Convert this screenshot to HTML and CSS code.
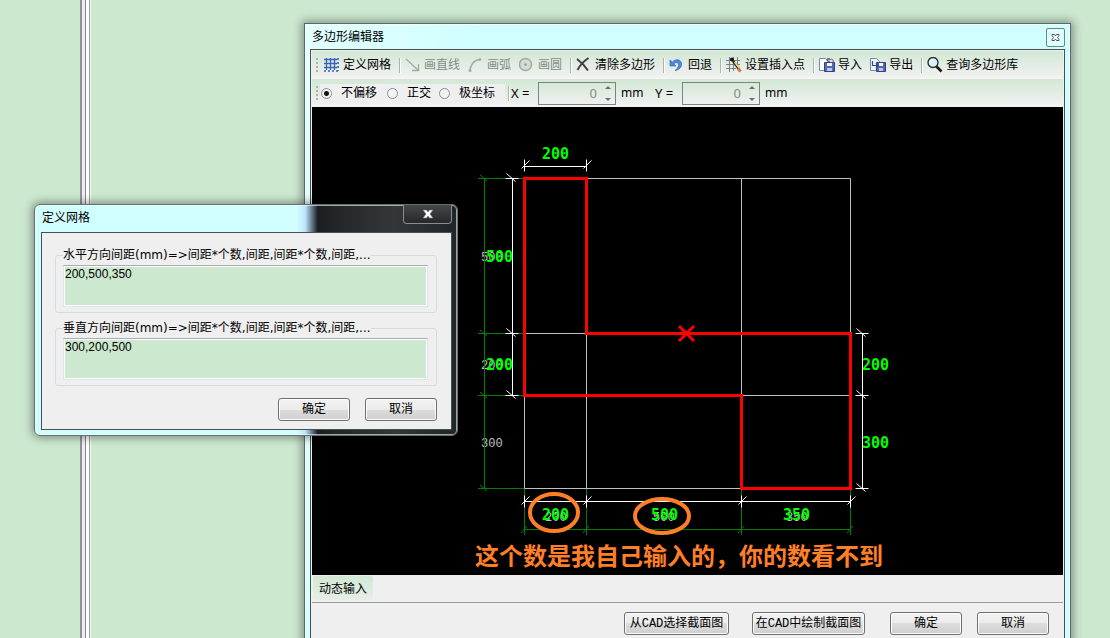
FILE: index.html
```
<!DOCTYPE html>
<html lang="zh-CN">
<head>
<meta charset="utf-8">
<title>多边形编辑器</title>
<link rel="stylesheet" href="styles.css">
</head>
<body>
<main class="desktop">
  <div class="pane-left"></div>
  <div class="splitter"></div>

  <section class="window editor" aria-label="多边形编辑器">
    <header class="titlebar">
      <h1 class="title">多边形编辑器</h1>
      <button class="editor-close" type="button" aria-label="关闭">
        <svg width="9" height="9" viewBox="0 0 9 9"><path d="M1 1.500h2.500l1 1.500 1-1.500H8v1L6.500 4.500 8 6.500v1H5.500l-1-1.500-1 1.500H1v-1L2.500 4.500 1 2.500z" fill="#fff" stroke="#4a5058"/></svg>
      </button>
    </header>
    <div class="client editor-client">
      <div class="toolbar">
        <span class="grip"></span>
        <button class="tool" type="button">
          <svg width="16" height="16" viewBox="0 0 16 16"><path d="M2.500 1v12M6.500 1v12M10.500 1v12M0 2.500h13M0 6.500h13M0 10.500h13" stroke="#3a62b8" stroke-width="1.300" fill="none"/><path d="M14 1v13M0 14h14" stroke="#3a62b8" stroke-width="1.600" stroke-dasharray="2 2"/></svg>
          定义网格</button>
        <span class="sep"></span>
        <button class="tool" type="button" disabled>
          <svg width="16" height="16" viewBox="0 0 16 16"><path d="M1 2l12 11M13.500 7v6.500H7" stroke="#a0aaa2" stroke-width="1.300" fill="none"/></svg>
          画直线</button>
        <button class="tool" type="button" disabled>
          <svg width="16" height="16" viewBox="0 0 16 16"><path d="M2 14C2 8 6 3 12 2.500" stroke="#a0aaa2" stroke-width="1.500" fill="none"/><circle cx="2" cy="13.500" r="1.500" fill="#a0aaa2"/><circle cx="12" cy="2.500" r="1.300" fill="#a0aaa2"/></svg>
          画弧</button>
        <button class="tool" type="button" disabled>
          <svg width="16" height="16" viewBox="0 0 16 16"><circle cx="6.500" cy="7.500" r="6" stroke="#a0aaa2" stroke-width="1.500" fill="#d3ddd4"/><circle cx="6.500" cy="7.500" r="1.200" fill="#8b958d"/></svg>
          画圆</button>
        <span class="sep"></span>
        <button class="tool" type="button">
          <svg width="16" height="16" viewBox="0 0 16 16"><path d="M1 2C5 5 9 9 12 13.500M12.500 1C8 4 4 8 1.500 13" stroke="#3d3d44" stroke-width="1.900" fill="none"/></svg>
          清除多边形</button>
        <span class="sep"></span>
        <button class="tool" type="button">
          <svg width="16" height="16" viewBox="0 0 16 16"><path d="M1 3v6h6L5 7c2-2.500 5-1.500 4.500 1.500C9.200 10.500 7.500 12.500 6 13.500c4-.5 7-3.500 6.500-7C12 2 6.500 1.500 3.500 5z" fill="#4b87dc" stroke="#3468b8" stroke-width=".7"/></svg>
          回退</button>
        <span class="sep"></span>
        <button class="tool" type="button">
          <svg width="16" height="16" viewBox="0 0 16 16"><path d="M3.500 0v15M7.500 0v14M11.500 0v9M0 3.500h14M0 7.500h14M0 11.500h10" stroke="#7b827d" fill="none"/><circle cx="6" cy="2.500" r="2" fill="#111"/><path d="M7 4l6 8" stroke="#33251c" stroke-width="2.600"/><path d="M8.500 5l5.500 7" stroke="#f0dc70" stroke-width="1.500"/><path d="M12 11.500l2.500 3" stroke="#cc775e" stroke-width="3"/></svg>
          设置插入点</button>
        <span class="sep"></span>
        <button class="tool" type="button">
          <svg width="16" height="16" viewBox="0 0 16 16"><path d="M.5 1.500h6l3 3v9h-9z" fill="#fff" stroke="#7188b5"/><path d="M5.500 5.500h10v9h-10z" fill="#5666b8" stroke="#363f7e"/><path d="M8 6h5v3H8z" fill="#f4f6ff"/><path d="M8 11h5v3H8z" fill="#bfc6e6"/><path d="M8 4l2-3 1 2c2-2 4 0 3 3M9 1l-1 3 3 .3" fill="none" stroke="#4f5768"/></svg>
          导入</button>
        <button class="tool" type="button">
          <svg width="16" height="16" viewBox="0 0 16 16"><path d="M.5 1.500h6l3 3v9h-9z" fill="#edf3ff" stroke="#7188b5"/><path d="M6.500 5.500h9v9h-9z" fill="#5666b8" stroke="#363f7e"/><path d="M9 6h4v3H9z" fill="#f4f6ff"/><path d="M9 11h4v3H9z" fill="#bfc6e6"/><path d="M2.500 4v4.500h6M6 6L8.500 8.500 6 11" fill="none" stroke="#3c4c78" stroke-width="1.200"/></svg>
          导出</button>
        <span class="sep"></span>
        <button class="tool" type="button">
          <svg width="16" height="16" viewBox="0 0 16 16"><circle cx="6" cy="5.500" r="5" fill="#d5f3fb" stroke="#23282b" stroke-width="1.300"/><path d="M3 5c.5-1.500 1.500-2 3-2" stroke="#fff" stroke-width="1.300" fill="none"/><path d="M9.500 9.500l5 5" stroke="#1b1b1b" stroke-width="2.600"/></svg>
          查询多边形库</button>
      </div>

      <div class="toolbar">
        <span class="grip"></span>
        <div class="modes" role="radiogroup" aria-label="偏移方式">
          <label class="mode"><input class="radio" type="radio" name="mode" checked>不偏移</label>
          <label class="mode"><input class="radio" type="radio" name="mode">正交</label>
          <label class="mode"><input class="radio" type="radio" name="mode">极坐标</label>
        </div>
        <span class="sep sep-tight"></span>
        <label class="axis" for="offset-x">X =</label>
        <span class="spinbox">
          <input class="spin-value" id="offset-x" type="text" value="0" disabled>
          <span class="spin-buttons">
            <button class="spin spin-up" type="button" aria-label="增加 X" disabled></button>
            <button class="spin spin-down" type="button" aria-label="减少 X" disabled></button>
          </span>
        </span>
        <span class="unit">mm</span>
        <label class="axis" for="offset-y">Y =</label>
        <span class="spinbox">
          <input class="spin-value" id="offset-y" type="text" value="0" disabled>
          <span class="spin-buttons">
            <button class="spin spin-up" type="button" aria-label="增加 Y" disabled></button>
            <button class="spin spin-down" type="button" aria-label="减少 Y" disabled></button>
          </span>
        </span>
        <span class="unit">mm</span>
      </div>

      <svg class="drawing" viewBox="312 107 751 468" role="img" aria-label="截面图">
        <defs>
          <path id="tick-v" d="M-7 0H6M-6-5L3 3" />
          <path id="tick-h" d="M0-6V6M-3 3L5-5" />
        </defs>
        <g class="grid">
          <path d="M524.500 178.500h326v310h-326zM586.500 178.500v310M741.500 178.500v310M524.500 333.500h326M524.500 395.500h326"/>
        </g>
        <g class="size-gray">
          <text x="481" y="261">500</text>
          <text x="481" y="369">200</text>
          <text x="481" y="447">300</text>
          <text x="545" y="521">200</text>
          <text x="653" y="521">500</text>
          <text x="786" y="521">350</text>
        </g>
        <g class="dim-green">
          <path d="M484.500 178.500v310M478 178.500h46M478 333.500h46M478 395.500h46M478 488.500h46"/>
          <path d="M480 175l7 6M480 330l7 6M480 392l7 6M480 485l7 6"/>
          <path d="M524.500 529.500h326M524.500 489v46M586.500 489v46M741.500 489v46M850.500 489v46"/>
          <path d="M521 533l6-7M583 533l6-7M738 533l6-7M847 533l6-7"/>
        </g>
        <g class="dim-white">
          <path d="M524.500 166.500h62M512.500 178.500v217M862.500 333.500v155M524.500 501.500h326"/>
          <use href="#tick-h" x="524.500" y="165.500"/><use href="#tick-h" x="586.500" y="165.500"/>
          <use href="#tick-v" x="512.500" y="178.500"/><use href="#tick-v" x="512.500" y="333.500"/><use href="#tick-v" x="512.500" y="395.500"/>
          <use href="#tick-v" x="862.500" y="333.500"/><use href="#tick-v" x="862.500" y="395.500"/><use href="#tick-v" x="862.500" y="488.500"/>
          <use href="#tick-h" x="524.500" y="501.500"/><use href="#tick-h" x="586.500" y="501.500"/><use href="#tick-h" x="741.500" y="501.500"/><use href="#tick-h" x="850.500" y="501.500"/>
        </g>
        <g class="size-green">
          <text x="542" y="159">200</text>
          <text x="486" y="262">500</text>
          <text x="486" y="370">200</text>
          <text x="862" y="370">200</text>
          <text x="862" y="448">300</text>
          <text x="542" y="520">200</text>
          <text x="651" y="520">500</text>
          <text x="783" y="520">350</text>
        </g>
        <path class="shape" d="M524.500 178.500h62v155h264v155h-109v-93h-217zM679 326l15 15M694 326l-15 15"/>
        <g class="marks">
          <ellipse cx="554" cy="512.500" rx="24" ry="18.500"/>
          <ellipse cx="662" cy="516" rx="27" ry="17"/>
        </g>
        <text class="remark" x="475" y="565">这个数是我自己输入的，你的数看不到</text>
      </svg>

      <div class="statusbar"><button class="status-tool" type="button">动态输入</button></div>
      <footer class="editor-actions">
        <button class="btn btn-from" type="button">从CAD选择截面图</button>
        <button class="btn btn-draw" type="button">在CAD中绘制截面图</button>
        <button class="btn" type="button">确定</button>
        <button class="btn" type="button">取消</button>
      </footer>
    </div>
  </section>

  <section class="window dialog" role="dialog" aria-label="定义网格">
    <header class="titlebar dialog-titlebar">
      <h2 class="title">定义网格</h2>
      <button class="dialog-close" type="button" aria-label="关闭">
        <svg width="12" height="10" viewBox="0 0 12 10"><path d="M1 1h3.500L6 3l1.500-2H11L8 5l3 4H7.500L6 7 4.500 9H1l3-4z" fill="#fff" stroke="#70747c" stroke-width=".6"/></svg>
      </button>
    </header>
    <form class="client dialog-client">
      <fieldset class="group">
        <legend class="legend"><label for="spacing-h">水平方向间距(mm)=&gt;间距*个数,间距,间距*个数,间距,...</label></legend>
        <textarea class="spacing" id="spacing-h">200,500,350</textarea>
      </fieldset>
      <fieldset class="group">
        <legend class="legend"><label for="spacing-v">垂直方向间距(mm)=&gt;间距*个数,间距,间距*个数,间距,...</label></legend>
        <textarea class="spacing" id="spacing-v">300,200,500</textarea>
      </fieldset>
      <div class="dialog-actions">
        <button class="btn" type="button">确定</button>
        <button class="btn" type="button">取消</button>
      </div>
    </form>
  </section>
</main>
</body>
</html>
```

FILE: styles.css
```
* {
  box-sizing: border-box;
}

body {
  margin: 0;
  font: 12px/16px "Noto Sans", "Noto Sans CJK SC", sans-serif;
  color: #000;
}

button,
input,
textarea {
  margin: 0;
  padding: 0;
  font: inherit;
  color: inherit;
}

.desktop {
  position: relative;
  display: flex;
  height: 100vh;
  overflow: hidden;
  background: #cce8cf;
}

.pane-left {
  flex: 0 0 80px;
}

.splitter {
  flex: 0 0 11px;
  background: linear-gradient(90deg, #8d929a 0 2px, #eeeef2 2px 5px, #85858f 5px 6px, #fff 6px 9px, #9b9ba3 9px 10px, #f6f6f6 10px 11px);
}

/* Windows */

.window {
  position: absolute;
  display: flex;
  flex-direction: column;
  border: 1px solid #566b69;
  box-shadow: inset 0 0 0 1px #f2ffff, 0 0 9px 2px rgba(0, 0, 0, 0.38);
}

.titlebar {
  display: flex;
  justify-content: space-between;
}

.title {
  margin: 0;
  font-size: 12px;
  line-height: 16px;
  font-weight: 400;
}

.client {
  border: 1px solid #44524f;
  background: #efefef;
}

.editor {
  top: 23px;
  left: 304px;
  right: 39px;
  padding: 0 5px 6px;
  background: linear-gradient(100deg, #e4ffff, #d0fefe 20%);
}

.editor .titlebar {
  height: 25px;
  padding: 4px 0 0 2px;
}

.editor .title {
  padding-top: 1px;
}

.editor-close {
  display: flex;
  align-items: center;
  justify-content: center;
  width: 19px;
  height: 19px;
  border: 1px solid #6a8583;
  border-radius: 2px;
  background: #dcffff;
}

.editor-client {
  padding: 1px;
}

/* Toolbars */

.toolbar {
  display: flex;
  align-items: center;
  height: 28px;
  padding-left: 4px;
  background: linear-gradient(#d2e8d5, #eef0ee 85%, #f5f5f5);
  white-space: nowrap;
}

.grip {
  flex: 0 0 2px;
  height: 14px;
  background: repeating-linear-gradient(#a9b5ab 0 2px, transparent 2px 4px);
}

.tool {
  display: flex;
  align-items: center;
  gap: 3px;
  margin-right: 8px;
  border: 0;
  background: none;
}

.grip + .tool {
  margin-left: 6px;
}

.tool:disabled {
  color: #838c85;
}

.sep {
  flex: 0 0 2px;
  height: 15px;
  margin-right: 4px;
  border-left: 1px solid #aab5ac;
  border-right: 1px solid #fff;
}

.sep-tight {
  margin-right: 1px;
}

.modes {
  display: flex;
  align-items: center;
  gap: 8px;
  height: 18px;
  margin-left: 2px;
  margin-right: 3px;
  padding: 0 10px 0 1px;
  background: #efefef;
}

.mode {
  display: flex;
  align-items: center;
  gap: 9px;
}

.mode:first-child {
  margin-right: 2px;
}

.radio {
  appearance: none;
  width: 11px;
  height: 11px;
  border: 1px solid #8a8f94;
  border-radius: 50%;
  background: #f3f3f3;
}

.radio:checked {
  background: radial-gradient(circle, #111 0 2px, #f3f3f3 3px);
}

.axis {
  width: 27px;
  font-size: 13px;
}

.spinbox {
  display: flex;
  width: 78px;
  height: 23px;
  border: 1px solid #7b857d;
}

.spin-value {
  flex: 1;
  min-width: 0;
  border: 0;
  background: none;
  color: #848c86;
  font-size: 13px;
  text-align: right;
}

.spin-buttons {
  display: flex;
  flex-direction: column;
  justify-content: space-between;
  align-items: center;
  width: 14px;
  margin-left: 4px;
  padding: 3px 0;
}

.spin {
  width: 0;
  height: 0;
  border: 3px solid transparent;
}

.spin-up {
  border-top: 0;
  border-bottom-color: #69716b;
}

.spin-down {
  border-bottom: 0;
  border-top-color: #69716b;
}

.unit {
  width: 39px;
  padding-left: 5px;
}

/* Drawing area */

.drawing {
  display: block;
  width: 100%;
  height: 468px;
  background: #000;
}

.grid,
.dim-green,
.dim-white {
  fill: none;
  stroke-width: 1px;
}

.grid {
  stroke: #c0c0c0;
}

.dim-green {
  stroke: #008000;
}

.dim-white {
  stroke: #fff;
}

.size-gray {
  font: 12px "Liberation Mono", monospace;
  fill: #c0c0c0;
}

.size-green {
  font: bold 15px "DejaVu Sans Mono", monospace;
  fill: #0f0;
}

.shape {
  fill: none;
  stroke: #f00;
  stroke-width: 3px;
}

.marks {
  fill: none;
  stroke: #ff7f27;
  stroke-width: 4px;
}

.remark {
  font: bold 24px "Noto Sans CJK SC", sans-serif;
  fill: #ff7f27;
}

/* Status and actions */

.statusbar {
  height: 28px;
  padding: 1px;
  border-bottom: 1px solid #9b9b9b;
}

.status-tool {
  height: 24px;
  padding: 1px 6px 0;
  border: 0;
  border-radius: 2px;
  background: linear-gradient(#d2e8d5, #e6eee7);
}

.editor-actions {
  display: flex;
  justify-content: flex-end;
  height: 40px;
  padding: 9px 14px 0 0;
}

.btn {
  width: 72px;
  height: 23px;
  margin-left: 15px;
  border: 1px solid #707070;
  border-radius: 3px;
  background: linear-gradient(#f3f3f3, #ebebeb 50%, #dddddd 50%, #cfcfcf);
  box-shadow: inset 0 0 0 1px #fcfcfc;
  font-family: "Liberation Mono", "Noto Sans CJK SC", monospace;
  line-height: 16px;
  white-space: nowrap;
}

.btn-from {
  width: 105px;
  margin-right: 8px;
}

.btn-draw {
  width: 113px;
  margin-right: 10px;
}

/* Grid dialog */

.dialog {
  top: 204px;
  left: 34px;
  width: 424px;
  padding: 0 5px 5px 6px;
  border-radius: 6px;
  border-color: #66706f;
  background: linear-gradient(90deg, #d0fefe 0 62%, #bfe6ff 64%, #1a1e22 67%, #24272a 72%, #34373a 85%, #222527);
  box-shadow: inset 0 0 0 1px rgba(242, 255, 255, 0.6), 0 0 9px 2px rgba(0, 0, 0, 0.38);
}

.dialog-titlebar {
  height: 27px;
}

.dialog-titlebar .title {
  padding: 5px 0 0 1px;
}

.dialog-close {
  display: flex;
  align-items: center;
  justify-content: center;
  width: 49px;
  height: 19px;
  border: 1px solid #8a8d90;
  border-top: 0;
  border-radius: 0 0 4px 4px;
  background: linear-gradient(#45484b, #26292c);
}

.dialog-client {
  display: flex;
  flex-direction: column;
  gap: 7px;
  padding: 14px 14px 8px 13px;
}

.group {
  min-width: 0;
  margin: 0;
  padding: 2px 8px 5px 7px;
  border: 1px solid #d3dce3;
  border-radius: 3px;
}

.legend {
  padding: 0;
  font-family: "DejaVu Sans", "Noto Sans CJK SC", sans-serif;
  line-height: 16px;
  white-space: nowrap;
}

.spacing {
  display: block;
  width: 100%;
  height: 42px;
  padding: 0 1px;
  border: 1px solid #dfe3ea;
  border-top-color: #a9adb3;
  background: #cce8cf;
  box-shadow: inset 0 0 0 1px #fff;
  font-family: "Liberation Sans", "Noto Sans CJK SC", sans-serif;
  line-height: 16px;
  resize: none;
  overflow: hidden;
}

.dialog-actions {
  display: flex;
  justify-content: flex-end;
  padding-top: 5px;
}
```
